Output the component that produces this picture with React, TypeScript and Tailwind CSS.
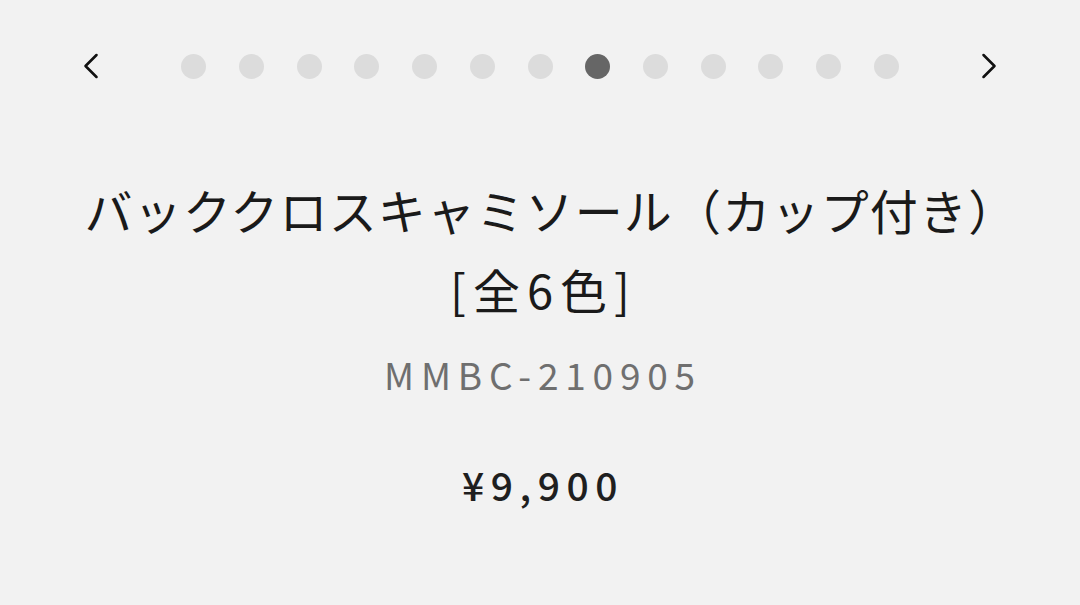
import { ChevronLeft, ChevronRight } from "lucide-react";

const dots = Array.from({ length: 13 }, (_, i) => i);
const activeIndex = 7;

export default function App() {
  return (
    <div
      className="w-[1080px] h-[605px] bg-[#f2f2f2] overflow-hidden text-[#1a1a1a]"
      style={{ fontFamily: '"Noto Sans CJK JP", "Noto Sans", sans-serif' }}
    >
      <div className="flex items-center justify-between pl-[69px] pr-[69px] pt-[44px]">
        <button className="w-[44px] h-[44px] flex items-center justify-center">
          <ChevronLeft size={44} strokeWidth={1.4} className="text-[#111]" />
        </button>
        <div className="flex items-center gap-[32.7px]">
          {dots.map((i) => (
            <span
              key={i}
              className={
                i === activeIndex
                  ? "block w-[25px] h-[25px] rounded-full bg-[#666666]"
                  : "block w-[25px] h-[25px] rounded-full bg-[#dcdcdc]"
              }
            />
          ))}
        </div>
        <button className="w-[44px] h-[44px] flex items-center justify-center">
          <ChevronRight size={44} strokeWidth={1.4} className="text-[#111]" />
        </button>
      </div>

      <div className="flex flex-col items-center text-center mt-[81px]">
        <h1 className="text-[48px] leading-[80px] font-normal tracking-[1.2px] whitespace-nowrap pl-[22px]">
          バッククロスキャミソール（カップ付き）
        </h1>
        <h2 className="text-[47px] leading-[80px] font-normal tracking-[7px] pl-[7px]">
          [全6色]
        </h2>
        <p className="mt-[21px] text-[37px] leading-[48px] text-[#6f6f6f] tracking-[6.8px] pl-[6px]">
          MMBC-210905
        </p>
        <p className="mt-[62px] text-[39px] leading-[48px] font-medium tracking-[6.5px] pl-[6px] text-[#1f1f1f]">
          ¥9,900
        </p>
      </div>
    </div>
  );
}
